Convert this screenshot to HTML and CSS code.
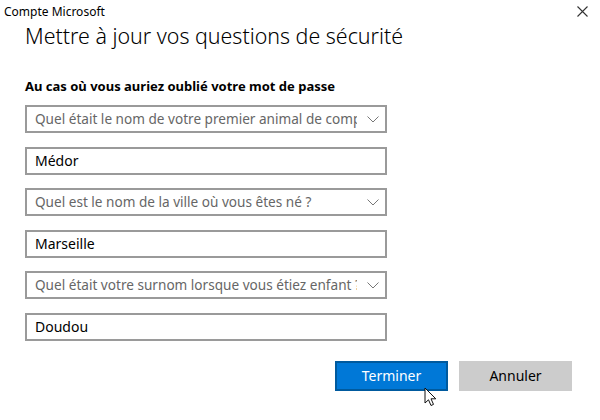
FILE: index.html
```html
<!DOCTYPE html>
<html lang="fr">
<head>
    <meta charset="UTF-8">
    <meta name="viewport" content="width=device-width, initial-scale=1.0">
    <title>Compte Microsoft</title>
    <link rel="stylesheet" href="styles.css">
</head>
<body>
    <!-- barre de titre de la fenêtre -->
    <div class="titlebar">
        <span class="app-name">Compte Microsoft</span>
        <svg class="close" width="11" height="11" viewBox="0 0 11 11">
            <path d="M0.5 0.5 L10.5 10.5 M10.5 0.5 L0.5 10.5" stroke="#333" stroke-width="1.1" fill="none"/>
        </svg>
    </div>

    <div class="content">
        <h1>Mettre à jour vos questions de sécurité</h1>
        <h2>Au cas où vous auriez oublié votre mot de passe</h2>

        <div class="fields">
            <div class="select">
                <span class="select-text">Quel était le nom de votre premier animal de compagnie ?</span>
                <svg class="chevron" width="12" height="7" viewBox="0 0 12 7"><path d="M0.5 0.5 L6 6 L11.5 0.5" stroke="#777" stroke-width="1" fill="none"/></svg>
            </div>
            <div class="textbox">Médor</div>

            <div class="select">
                <span class="select-text">Quel est le nom de la ville où vous êtes né ?</span>
                <svg class="chevron" width="12" height="7" viewBox="0 0 12 7"><path d="M0.5 0.5 L6 6 L11.5 0.5" stroke="#777" stroke-width="1" fill="none"/></svg>
            </div>
            <div class="textbox">Marseille</div>

            <div class="select">
                <span class="select-text">Quel était votre surnom lorsque vous étiez enfant ?</span>
                <svg class="chevron" width="12" height="7" viewBox="0 0 12 7"><path d="M0.5 0.5 L6 6 L11.5 0.5" stroke="#777" stroke-width="1" fill="none"/></svg>
            </div>
            <div class="textbox">Doudou</div>
        </div>

        <div class="actions">
            <button class="btn btn-primary">Terminer</button>
            <button class="btn">Annuler</button>
            <!-- pointeur de la souris au-dessus du bouton -->
            <svg class="cursor" width="14" height="20" viewBox="0 0 14 20">
                <path d="M1 1 L1 16 L4.5 12.8 L7 18.5 L9.5 17.4 L7 11.8 L11.8 11.8 Z" fill="#fff" stroke="#111" stroke-width="1" stroke-linejoin="round"/>
            </svg>
        </div>
    </div>
</body>
</html>
```

FILE: styles.css
```css
html, body {
    height: 100%;
}
body {
    margin: 0;
    background: #fff;
    font-family: "Noto Sans", "Open Sans", sans-serif;
    color: #000;
}
.titlebar {
    display: flex;
    justify-content: space-between;
    align-items: center;
    height: 22px;
    padding: 0 12px 0 4px;
}
.app-name {
    font-size: 12px;
    color: #000;
}
.close {
    display: block;
}
.content {
    padding-left: 25px;
}
h1 {
    margin: -1px 0 0 0;
    font-size: 21.4px;
    font-weight: 300;
    line-height: 30px;
    color: #000;
}
h2 {
    margin: 26px 0 0 0;
    font-size: 13px;
    font-weight: 700;
    line-height: 18px;
}
.fields {
    display: flex;
    flex-direction: column;
    gap: 13.5px;
    margin-top: 10px;
    width: 362px;
}
.select, .textbox {
    box-sizing: border-box;
    height: 28px;
    border: 2px solid #9a9a9a;
    padding: 0 8px;
    font-size: 14px;
    line-height: 24px;
    display: flex;
    align-items: center;
}
.select {
    color: #666;
    padding-right: 6px;
    font-size: 13.6px;
}
.select-text {
    flex: 1;
    overflow: hidden;
    white-space: nowrap;
    margin-right: 10px;
}
.chevron {
    flex: none;
}
.textbox {
    color: #000;
}
.actions {
    position: relative;
    display: flex;
    justify-content: flex-end;
    gap: 11px;
    margin-top: 20px;
    padding-right: 28px;
    padding-bottom: 20px;
}
.btn {
    box-sizing: border-box;
    width: 113px;
    height: 30px;
    border: 2px solid #ccc;
    background: #ccc;
    color: #000;
    font-family: inherit;
    font-size: 14px;
    padding: 0;
}
.btn-primary {
    background: #0078d7;
    border-color: #005a9e;
    color: #fff;
}
.cursor {
    position: absolute;
    z-index: 1;
    display: block;
    left: 399px;
    top: 26px;
}
```
